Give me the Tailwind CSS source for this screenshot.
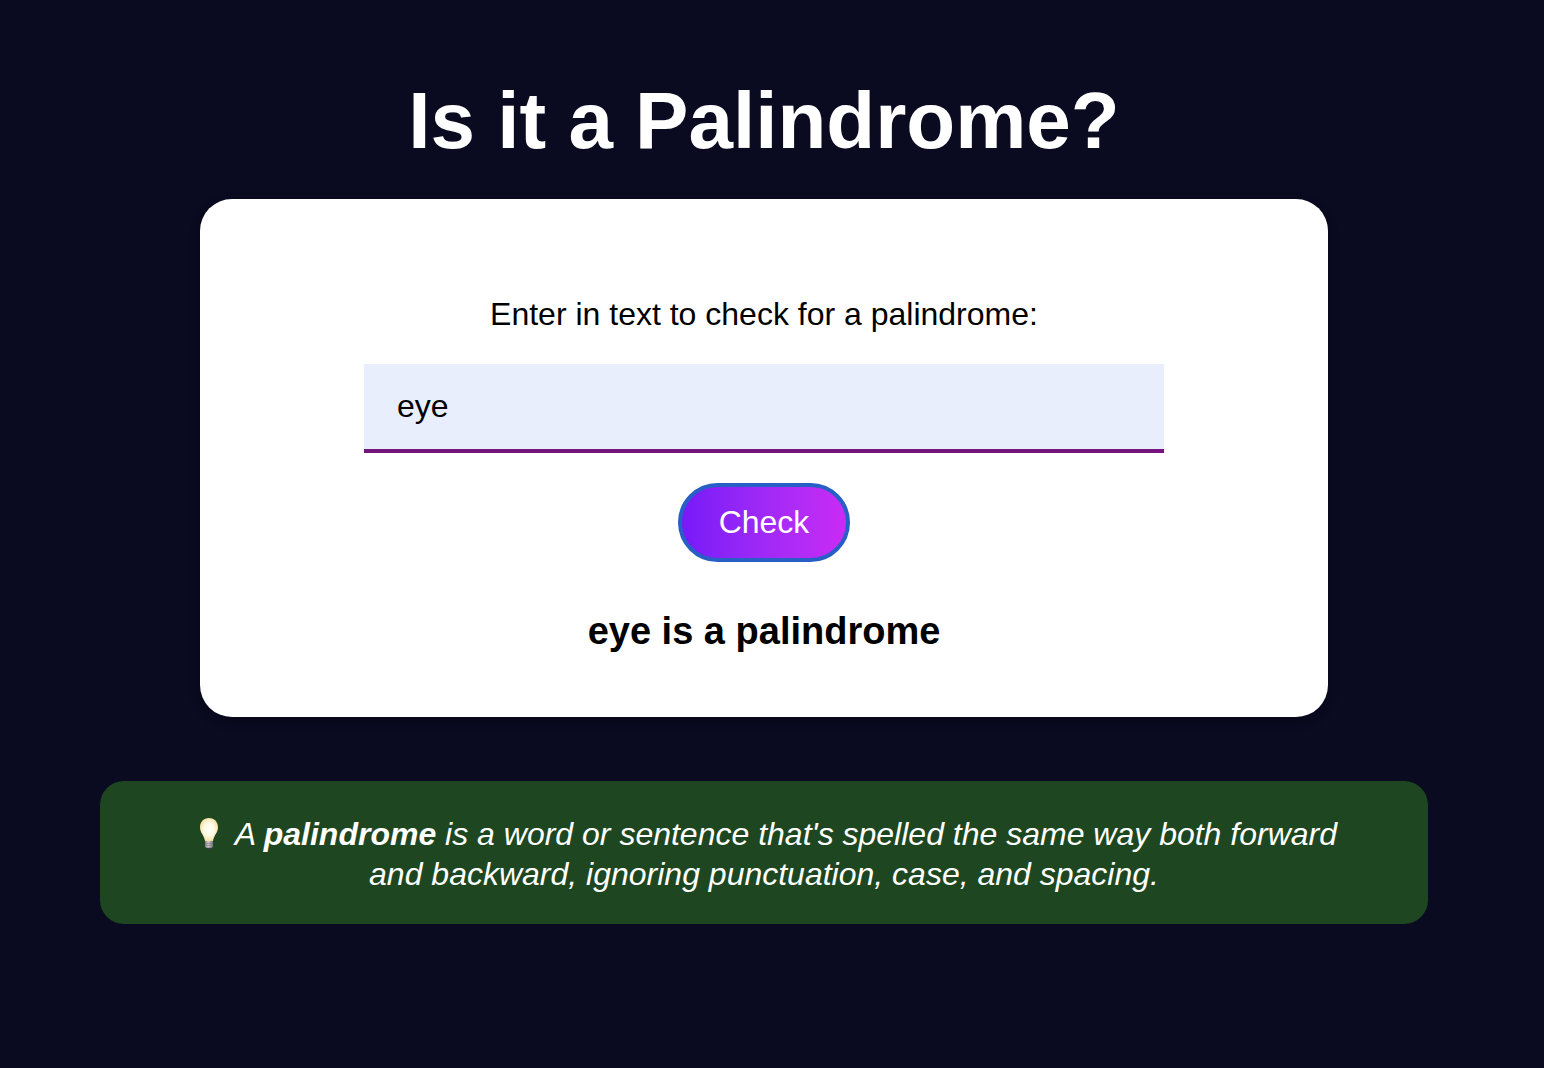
<!DOCTYPE html>
<html lang="en">
<head>
<meta charset="utf-8">
<meta name="viewport" content="width=device-width, initial-scale=1">
<title>Palindrome Checker</title>
<script src="https://cdn.jsdelivr.net/npm/@tailwindcss/browser@4"></script>
</head>
<body class="min-h-screen bg-[#0a0a20] font-['Liberation_Sans',Arial,sans-serif] text-[32px] leading-10 text-black">
<main class="flex flex-col items-center pt-[74px] pr-4 pb-16 text-center">
  <h1 class="text-[80px] leading-[93px] font-bold text-white">Is it a Palindrome?</h1>
  <section class="mt-8 flex w-full max-w-[1128px] flex-col items-center rounded-[32px] bg-white px-8 pt-[95px] pb-16 shadow-[0_4px_12px] shadow-black/20">
    <form class="flex w-full max-w-[800px] flex-col items-center" onsubmit="return false">
      <label for="text-input">Enter in text to check for a palindrome:</label>
      <input id="text-input" type="text" value="eye" class="mt-[30px] h-[89px] w-full border-b-4 border-[#75147c] bg-[#e8eefc] px-[33px] outline-none">
      <button type="submit" class="mt-[30px] h-[79px] w-[172px] rounded-full border-4 border-[#285fc6] bg-linear-to-r from-[#7517f8] to-[#cc2af5] bg-origin-border pb-0.5 text-white">Check</button>
    </form>
    <output for="text-input" class="mt-[47px] text-[38px] leading-[44px] font-bold">eye is a palindrome</output>
  </section>
  <aside class="mt-16 w-full max-w-[1328px] rounded-3xl bg-[#1e4620] px-20 pt-[33px] pb-[30px] text-white italic">
    <svg class="inline-block h-9 w-9 align-[-7px]" viewBox="0 0 36 36" role="img" aria-label="Light bulb">
      <defs>
        <radialGradient id="glass" cx=".5" cy=".5" r=".58"><stop offset="0" stop-color="#fffef8"/><stop offset=".5" stop-color="#fff9e6"/><stop offset=".82" stop-color="#f8e7ae"/><stop offset="1" stop-color="#d7c47b"/></radialGradient>
        <linearGradient id="base"><stop offset="0" stop-color="#827d82"/><stop offset=".4" stop-color="#d0ccd0"/><stop offset="1" stop-color="#77727a"/></linearGradient>
      </defs>
      <path d="M15 30.500h6.500l-1 1.800-1.500.9h-1.500l-1.500-.9z" fill="#383a46"/>
      <path d="M14 24h8v6.500l-1 1.200h-6l-1-1.200z" fill="url(#base)"/>
      <path d="M14 27.500h8M14 29.500h8" stroke="#777078" stroke-width=".6"/>
      <path d="M18 2c-5.400 0-9 3.900-9 9.300 0 5.500 3.900 7.600 5 13.600h8c1.100-6 5-8.100 5-13.600 0-5.400-3.600-9.300-9-9.300z" fill="url(#glass)"/>
    </svg>
    A <strong>palindrome</strong> is a word or sentence that's spelled the same way both forward and backward, ignoring punctuation, case, and spacing.
  </aside>
</main>
</body>
</html>
